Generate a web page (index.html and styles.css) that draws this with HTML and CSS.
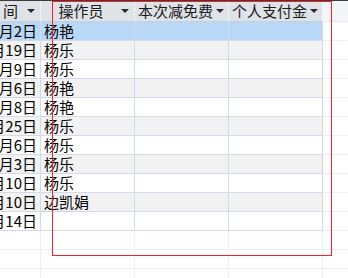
FILE: index.html
```html
<!DOCTYPE html>
<html lang="zh-CN">
<head>
<meta charset="utf-8">
<title>收费记录</title>
<link rel="stylesheet" href="styles.css">
</head>
<body>
<div class="sheet">
  <div class="row head">
    <div class="hcell first"><span class="label">间</span><span class="drop"></span></div>
    <div class="hcell"><span class="label">操作员</span><span class="drop"></span></div>
    <div class="hcell"><span class="label">本次减免费</span><span class="drop"></span></div>
    <div class="hcell"><span class="label">个人支付金</span><span class="drop"></span></div>
    <div class="hcell rest"></div>
  </div>

  <div class="row sel"><div class="cell date"><span>月2日</span></div><div class="cell">杨艳</div><div class="cell"></div><div class="cell"></div><div class="cell rest"></div></div>
  <div class="row alt"><div class="cell date"><span>月19日</span></div><div class="cell">杨乐</div><div class="cell"></div><div class="cell"></div><div class="cell rest"></div></div>
  <div class="row"><div class="cell date"><span>月9日</span></div><div class="cell">杨乐</div><div class="cell"></div><div class="cell"></div><div class="cell rest"></div></div>
  <div class="row alt"><div class="cell date"><span>月6日</span></div><div class="cell">杨艳</div><div class="cell"></div><div class="cell"></div><div class="cell rest"></div></div>
  <div class="row"><div class="cell date"><span>月8日</span></div><div class="cell">杨艳</div><div class="cell"></div><div class="cell"></div><div class="cell rest"></div></div>
  <div class="row alt"><div class="cell date"><span>月25日</span></div><div class="cell">杨乐</div><div class="cell"></div><div class="cell"></div><div class="cell rest"></div></div>
  <div class="row"><div class="cell date"><span>月6日</span></div><div class="cell">杨乐</div><div class="cell"></div><div class="cell"></div><div class="cell rest"></div></div>
  <div class="row alt"><div class="cell date"><span>月3日</span></div><div class="cell">杨乐</div><div class="cell"></div><div class="cell"></div><div class="cell rest"></div></div>
  <div class="row"><div class="cell date"><span>月10日</span></div><div class="cell">杨乐</div><div class="cell"></div><div class="cell"></div><div class="cell rest"></div></div>
  <div class="row alt"><div class="cell date"><span>月10日</span></div><div class="cell">边凯娟</div><div class="cell"></div><div class="cell"></div><div class="cell rest"></div></div>
  <div class="row"><div class="cell date"><span>月14日</span></div><div class="cell"></div><div class="cell"></div><div class="cell"></div><div class="cell rest"></div></div>

  <div class="row blank"><div class="cell"></div><div class="cell"></div><div class="cell"></div><div class="cell"></div><div class="cell rest"></div></div>
  <div class="row blank"><div class="cell"></div><div class="cell"></div><div class="cell"></div><div class="cell"></div><div class="cell rest"></div></div>
  <div class="row blank"><div class="cell"></div><div class="cell"></div><div class="cell"></div><div class="cell"></div><div class="cell rest"></div></div>

  <div class="mark"></div>
</div>
</body>
</html>
```

FILE: styles.css
```css
html, body {
  margin: 0;
  padding: 0;
  background: #ffffff;
}

body {
  width: 348px;
  height: 278px;
  overflow: hidden;
  font-family: "Noto Sans CJK SC", "Noto Sans", sans-serif;
  font-size: 15px;
  color: #000000;
}

.sheet {
  position: relative;
  width: 348px;
  height: 278px;
  overflow: hidden;
}

/* every line of the sheet shares the same column grid */
.row {
  display: grid;
  grid-template-columns: 41px 94px 94px 94px 1fr;
  height: 19px;
}

.head {
  height: 22px;
  border-top: 1px solid #3c3c3c;
  box-sizing: border-box;
}

.hcell {
  display: flex;
  align-items: center;
  box-sizing: border-box;
  background: #dfe2e7;
  border-right: 1px solid #f2f3f5;
  border-bottom: 1px solid #c9cfd9;
  padding-left: 3px;
  padding-right: 5px;
  white-space: nowrap;
  line-height: 20px;
  color: #1a1a1a;
}

.hcell .label {
  flex: 1;
  text-align: center;
}

.hcell.first .label {
  flex: none;
  text-align: left;
}

.hcell.first .drop {
  margin-left: auto;
}

.hcell.rest {
  background: #f3f5fa;
  border-right: none;
  border-bottom: 1px solid #e6e9f0;
}

/* filter dropdown arrow */
.drop {
  flex: none;
  width: 0;
  height: 0;
  border-left: 4px solid transparent;
  border-right: 4px solid transparent;
  border-top: 4px solid #2a2a2a;
  margin-left: 3px;
}

.cell {
  box-sizing: border-box;
  border-right: 1px solid #d3d9e6;
  border-bottom: 1px solid #d3d9e6;
  padding-left: 3px;
  line-height: 18px;
  white-space: nowrap;
}

.cell.rest {
  border-right: none;
  border-bottom: 1px solid #eef0f4;
  background: #ffffff;
}

/* dates are right-aligned and clip on the left when too wide */
.cell.date {
  display: flex;
  justify-content: flex-end;
  padding-left: 0;
  padding-right: 3px;
  overflow: hidden;
}

.cell.date span {
  flex: none;
}

.sel .cell {
  background: #b9d8f8;
}

.alt .cell {
  background: #f2f2f2;
}

.sel .cell.rest,
.alt .cell.rest {
  background: #ffffff;
}

.blank .cell {
  border-right: 1px solid #eef0f4;
  border-bottom: 1px solid #eef0f4;
}

.blank .cell.rest {
  border-right: none;
}

/* red highlight frame drawn over the grid */
.mark {
  position: absolute;
  left: 52px;
  top: 1px;
  width: 280px;
  height: 255px;
  border: 1px solid #ee2424;
  box-sizing: border-box;
  pointer-events: none;
}
```
